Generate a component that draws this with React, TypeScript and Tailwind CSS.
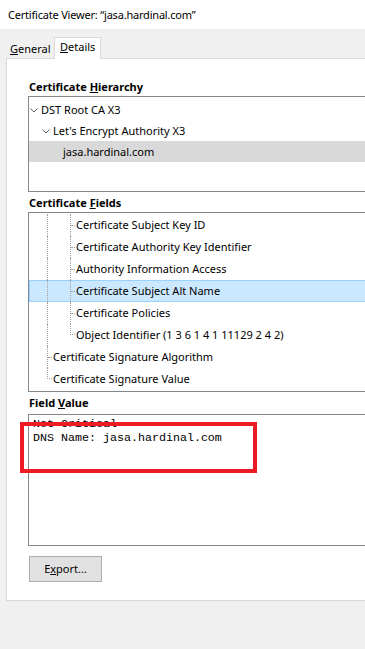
import React from "react";

const dot = "border-dotted border-[#a0a0a0]";

const Chevron = () => (
  <svg width="8" height="5" viewBox="0 0 8 5" className="shrink-0">
    <path d="M0.5 0.5 L4 4 L7.5 0.5" fill="none" stroke="#5a5a5a" strokeWidth="1" />
  </svg>
);

type Field = { name: string; level: 1 | 2; last?: boolean; selected?: boolean };

const fields: Field[] = [
  { name: "Certificate Subject Key ID", level: 2 },
  { name: "Certificate Authority Key Identifier", level: 2 },
  { name: "Authority Information Access", level: 2 },
  { name: "Certificate Subject Alt Name", level: 2, selected: true },
  { name: "Certificate Policies", level: 2 },
  { name: "Object Identifier (1 3 6 1 4 1 11129 2 4 2)", level: 2, last: true },
  { name: "Certificate Signature Algorithm", level: 1 },
  { name: "Certificate Signature Value", level: 1, last: true },
];

// tree guide piece: vertical line (full or half) with a short horizontal tick
const Tick = ({ last }: { last?: boolean }) =>
  last ? (
    <div className="w-[5px] flex flex-col shrink-0">
      <div className={`h-[11px] border-l border-b ${dot}`} />
    </div>
  ) : (
    <div className={`w-[5px] border-l ${dot} flex items-center shrink-0`}>
      <div className={`w-full border-t ${dot}`} />
    </div>
  );

const FieldRow = ({ f }: { f: Field }) => (
  <div
    className={`flex h-[22px] items-stretch ${
      f.selected ? "bg-[#cce8ff] shadow-[inset_0_0_0_1px_#99d1ff]" : ""
    }`}
  >
    <div className="w-[18px] shrink-0" />
    {f.level === 2 ? (
      <>
        <div className={`w-[23px] border-l ${dot} shrink-0`} />
        <Tick last={f.last} />
      </>
    ) : (
      <Tick last={f.last} />
    )}
    <span className="flex items-center pl-[1px] pt-px whitespace-nowrap">{f.name}</span>
  </div>
);

export default function App() {
  return (
    <div className="relative w-[365px] h-[649px] overflow-hidden bg-[#f0f0f0] text-black text-[11px] font-['Noto_Sans',sans-serif]">
      <div className="h-[29px] bg-white flex items-center pl-2 pt-px tracking-[-0.2px]">
        Certificate Viewer: “jasa.hardinal.com”
      </div>

      {/* tabs */}
      <div className="relative z-10 flex items-end pl-[6px] pt-[9px] h-[30px] -mb-px">
        <div className="w-[48px] h-[18px] flex items-center pl-[4px] mb-px">
          <span>
            <u>G</u>eneral
          </span>
        </div>
        <div className="w-[47px] h-[22px] bg-white border border-b-0 border-[#d9d9d9] flex items-center pl-[5px] pb-[3px]">
          <span>
            <u>D</u>etails
          </span>
        </div>
      </div>

      <div className="ml-[6px] w-[380px] h-[543px] bg-white border border-[#d9d9d9] pl-[21px] pt-[19px]">
        <div className="h-[16px] leading-[16px] pl-[1px] pt-px font-bold">
          Certificate <u>H</u>ierarchy
        </div>
        <div className="mt-[2px] w-[350px] h-[96px] border border-[#828790] pt-[2px]">
          <div className="h-[21px] flex items-center gap-[3px] pl-[1px] pt-px">
            <Chevron />
            <span>DST Root CA X3</span>
          </div>
          <div className="h-[21px] flex items-center gap-[3px] pl-[13px] pt-px">
            <Chevron />
            <span>Let's Encrypt Authority X3</span>
          </div>
          <div className="h-[21px] flex items-center pl-[34px] pt-px bg-[#d9d9d9]">
            jasa.hardinal.com
          </div>
        </div>

        <div className="mt-[2px] h-[16px] leading-[16px] pl-[1px] pt-px font-bold">
          Certificate <u>F</u>ields
        </div>
        <div className="mt-[2px] w-[350px] h-[180px] border border-[#828790] pt-[1px] overflow-hidden">
          {fields.map((f) => (
            <FieldRow key={f.name} f={f} />
          ))}
        </div>

        <div className="mt-[2px] h-[16px] leading-[16px] pl-[1px] pt-px font-bold">
          Field <u>V</u>alue
        </div>
        <div className="mt-[4px] w-[350px] h-[132px] border border-[#828790] pl-[4px] pt-[2px] font-['Liberation_Mono',monospace] text-[11.67px] leading-[14px] whitespace-pre">
          <div>Not Critical</div>
          <div>DNS Name: jasa.hardinal.com</div>
        </div>

        <button className="mt-[10px] ml-[1px] w-[73px] h-[26px] bg-[#e1e1e1] border border-[#adadad] flex items-center justify-center pt-px">
          <span>
            E<u>x</u>port...
          </span>
        </button>
      </div>

      {/* red annotation box */}
      <div className="absolute left-[20px] top-[422px] w-[237px] h-[51px] border-[4px] border-[#ed1c24]" />
    </div>
  );
}
